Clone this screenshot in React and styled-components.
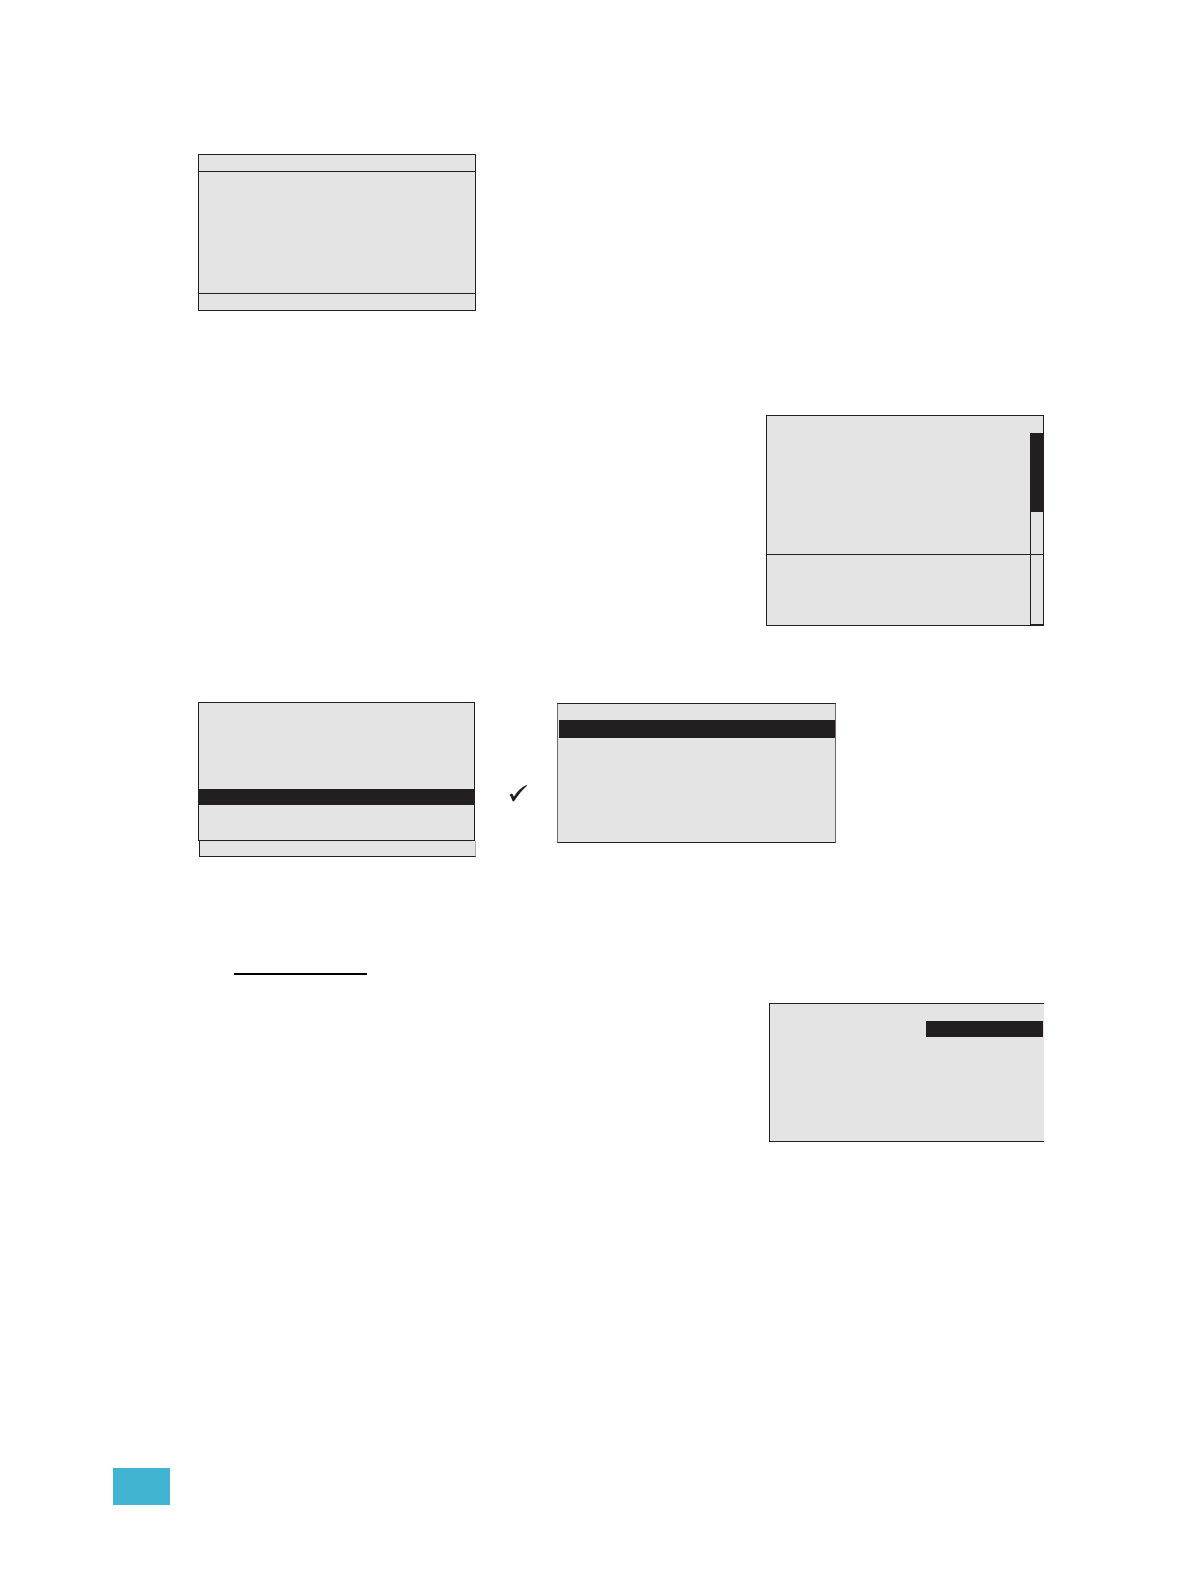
import React from 'react';
import styled, { createGlobalStyle } from 'styled-components';

const ink = '#231f20';
const screen = '#e4e4e4';

function App() {
    return (
        <>
            <GlobalStyle />
            <Page>
                <Content>
                    <Screen>
                        <TitleRow />
                        <ScreenBody height="121px" />
                        <StatusRow />
                    </Screen>

                    <RightRow gap="104px">
                        <Screen>
                            <ListAndScroll>
                                <ListColumn>
                                    <ScreenBody height="138px" />
                                    <Details />
                                </ListColumn>
                                <ScrollColumn>
                                    <ScrollThumb />
                                    <ScrollTrack>
                                        <ScreenBody height="42px" />
                                        <TrackEnd />
                                    </ScrollTrack>
                                </ScrollColumn>
                            </ListAndScroll>
                        </Screen>
                    </RightRow>

                    <MenuRow>
                        <MenuWithFooter>
                            <Menu>
                                <ScreenBody height="86px" />
                                <SelectedRow height="16px" />
                                <ScreenBody height="35px" />
                            </Menu>
                            <MenuFooter />
                        </MenuWithFooter>
                        <Check viewBox="0 0 20 18" aria-hidden="true">
                            <path d="M0.6 10.2 C1.2 8.8 2.8 8.3 3.6 9.3 C4.1 10 4.5 10.9 4.9 11.8 C8 6.8 12.2 2.4 17.6 0.1 L18.1 0.8 C13.4 4.8 9.2 9.9 5.6 15.6 C4.9 16.8 3.9 16.9 3.4 15.8 C2.6 13.6 2.2 11.3 0.6 10.2 Z" />
                        </Check>
                        <SubMenu>
                            <ScreenBody height="16px" />
                            <SelectedRow height="18px" inset />
                            <ScreenBody height="104px" />
                        </SubMenu>
                    </MenuRow>

                    <Rule />

                    <RightRow gap="28px">
                        <OpenScreen>
                            <ScreenBody height="17px" />
                            <SelectedValue />
                            <ScreenBody height="104px" />
                        </OpenScreen>
                    </RightRow>
                </Content>
                <PageTab />
            </Page>
        </>
    );
}


const GlobalStyle = createGlobalStyle`
  * {
    box-sizing: border-box;
  }

  body {
    margin: 0;
    background-color: #ffffff;
    font-family: "Liberation Sans", sans-serif;
  }
`

const Page = styled.main`
  display: flex;
  flex-direction: column;
  justify-content: space-between;
  min-height: 100vh;
  padding: 154px 144px 79px 113px;
`

const Content = styled.div`
  padding-left: 85px;
`

const Screen = styled.section`
  width: 278px;
  border: 1px solid ${ink};
  background-color: ${screen};
`

const TitleRow = styled.div`
  height: 17px;
  border-bottom: 1px solid ${ink};
`

const StatusRow = styled.div`
  height: 17px;
  border-top: 1px solid ${ink};
`

const ScreenBody = styled.div.withConfig({ shouldForwardProp: (p) => p !== 'height' })`
  height: ${(props) => props.height};
`

const RightRow = styled.div`
  display: flex;
  justify-content: flex-end;
  margin-top: ${(props) => props.gap};
`

const ListAndScroll = styled.div`
  display: flex;
`

const ListColumn = styled.div`
  flex: 1;
`

const Details = styled.div`
  height: 71px;
  border-top: 1px solid ${ink};
`

const ScrollColumn = styled.div`
  width: 13px;
  padding-top: 17px;
`

const ScrollThumb = styled.div`
  height: 79px;
  background-color: ${ink};
`

const ScrollTrack = styled.div`
  border-left: 1px solid ${ink};
`

const TrackEnd = styled.div`
  height: 71px;
  border-top: 1px solid ${ink};
  border-bottom: 1px solid ${ink};
`

const MenuRow = styled.div`
  display: flex;
  align-items: flex-start;
  margin-top: 76px;
`

const MenuWithFooter = styled.div`
  width: 278px;
`

const Menu = styled.section`
  width: 277px;
  border: 1px solid ${ink};
  background-color: ${screen};
`

const MenuFooter = styled.div`
  height: 16px;
  margin-left: 1px;
  border-left: 1px solid ${ink};
  border-right: 1px solid #aaaaaa;
  border-bottom: 1px solid ${ink};
  background-color: ${screen};
`

const SelectedRow = styled.div.withConfig({ shouldForwardProp: (p) => p !== 'height' && p !== 'inset' })`
  height: ${(props) => props.height};
  margin-left: ${(props) => (props.inset ? '1px' : '0')};
  background-color: ${ink};
`

const Check = styled.svg`
  width: 20px;
  height: 18px;
  margin: 83px 28px 0 33px;
  fill: ${ink};
`

const SubMenu = styled.section`
  width: 279px;
  margin-top: 1px;
  border: 1px solid #6a6a6a;
  border-top-color: ${ink};
  border-bottom-color: ${ink};
  background-color: ${screen};
`

const Rule = styled.hr`
  width: 133px;
  height: 2px;
  margin: 116px 0 0 36px;
  border: none;
  background-color: #000000;
`

const OpenScreen = styled.section`
  width: 275px;
  border: 1px solid ${ink};
  border-right: none;
  background-color: ${screen};
`

const SelectedValue = styled.div`
  width: 117px;
  height: 16px;
  margin: 0 1px 0 auto;
  background-color: ${ink};
`

const PageTab = styled.footer`
  width: 57px;
  height: 37px;
  background-color: #41b4d2;
`

export default App;
